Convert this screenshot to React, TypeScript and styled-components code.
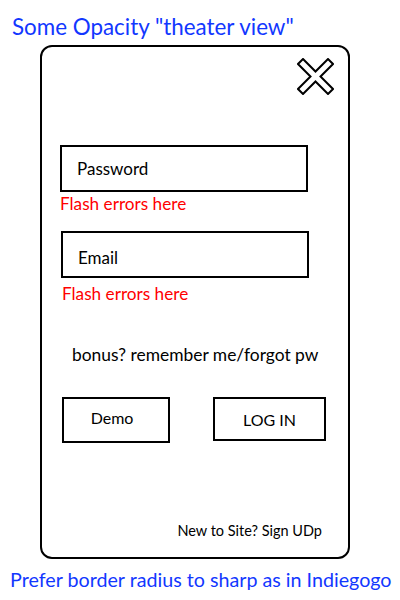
import React from "react"
import styled, { createGlobalStyle } from "styled-components"

const GlobalStyle = createGlobalStyle`
  html, body {
    margin: 0;
    padding: 0;
    background: #fff;
  }
  body {
    font-family: Lato, "Open Sans", sans-serif;
    color: #000;
  }
`

const Page = styled.div`
  width: 400px;
  height: 600px;
  display: flex;
  flex-direction: column;
`

const Note = styled.div<{ $indent: number; $size: number; $top: number }>`
  color: #1237ff;
  font-size: ${p => p.$size}px;
  line-height: 27px;
  margin-top: ${p => p.$top}px;
  padding-left: ${p => p.$indent}px;
  white-space: nowrap;
`

const Card = styled.section`
  box-sizing: border-box;
  width: 310px;
  height: 514px;
  margin: 5px 0 0 40px;
  border: 2px solid #000;
  border-radius: 12px;
  padding: 11px 14px 0 18px;
  display: flex;
  flex-direction: column;
`

const CloseRow = styled.div`
  display: flex;
  justify-content: flex-end;
`

const CloseButton = styled.button`
  width: 37px;
  height: 37px;
  padding: 0;
  border: none;
  background: none;
  cursor: pointer;
`

const Field = styled.div<{ $top: number; $shift?: number; $drop?: number }>`
  box-sizing: border-box;
  width: 248px;
  height: 47px;
  margin: ${p => p.$top}px 0 0 ${p => p.$shift || 0}px;
  border: 2px solid #000;
  padding: ${p => p.$drop || 0}px 15px 0;
  display: flex;
  align-items: center;
  font-size: 17px;
`

const FlashError = styled.div<{ $top: number; $shift?: number }>`
  color: #ff0000;
  font-size: 17.2px;
  line-height: 20px;
  margin: ${p => p.$top}px 0 0 ${p => p.$shift || 0}px;
`

const Bonus = styled.div`
  font-size: 17.4px;
  line-height: 20px;
  margin: 41px 0 0 12px;
`

const ButtonRow = styled.div`
  display: flex;
  align-items: flex-start;
  margin: 32px 0 0 2px;
  gap: 43px;
`

const ActionButton = styled.button<{ $w: number; $h: number; $nudge?: number }>`
  box-sizing: border-box;
  width: ${p => p.$w}px;
  height: ${p => p.$h}px;
  border: 2px solid #000;
  background: #fff;
  font-family: Lato, "Open Sans", sans-serif;
  font-size: 16px;
  color: #000;
  padding: 0 ${p => p.$nudge || 0}px ${p => (p.$nudge ? 5 : 0)}px 0;
  cursor: pointer;
`

const Footer = styled.div`
  margin-top: auto;
  padding-bottom: 17px;
  align-self: flex-end;
  font-size: 14.5px;
  line-height: 18px;
  padding-right: 12px;
`

const CloseIcon = () => (
  <svg width="37" height="37" viewBox="0 0 37 37">
    <polygon
      points="6,1 18.5,13.5 31,1 36,6 23.5,18.5 36,31 31,36 18.5,23.5 6,36 1,31 13.5,18.5 1,6"
      fill="#fff"
      stroke="#000"
      strokeWidth="2"
      strokeLinejoin="miter"
    />
  </svg>
)

export default function App() {
  return (
    <Page>
      <GlobalStyle />
      <Note $indent={12} $size={22.4} $top={13}>Some Opacity "theater view"</Note>
      <Card>
        <CloseRow>
          <CloseButton aria-label="close">
            <CloseIcon />
          </CloseButton>
        </CloseRow>
        <Field $top={50}>Password</Field>
        <FlashError $top={2}>Flash errors here</FlashError>
        <Field $top={17} $shift={1} $drop={5}>Email</Field>
        <FlashError $top={6} $shift={2}>Flash errors here</FlashError>
        <Bonus>bonus? remember me/forgot pw</Bonus>
        <ButtonRow>
          <ActionButton $w={108} $h={46} $nudge={8}>Demo</ActionButton>
          <ActionButton $w={113} $h={44}>LOG IN</ActionButton>
        </ButtonRow>
        <Footer>New to Site? Sign UDp</Footer>
      </Card>
      <Note $indent={10} $size={19.7} $top={7}>Prefer border radius to sharp as in Indiegogo</Note>
    </Page>
  )
}
